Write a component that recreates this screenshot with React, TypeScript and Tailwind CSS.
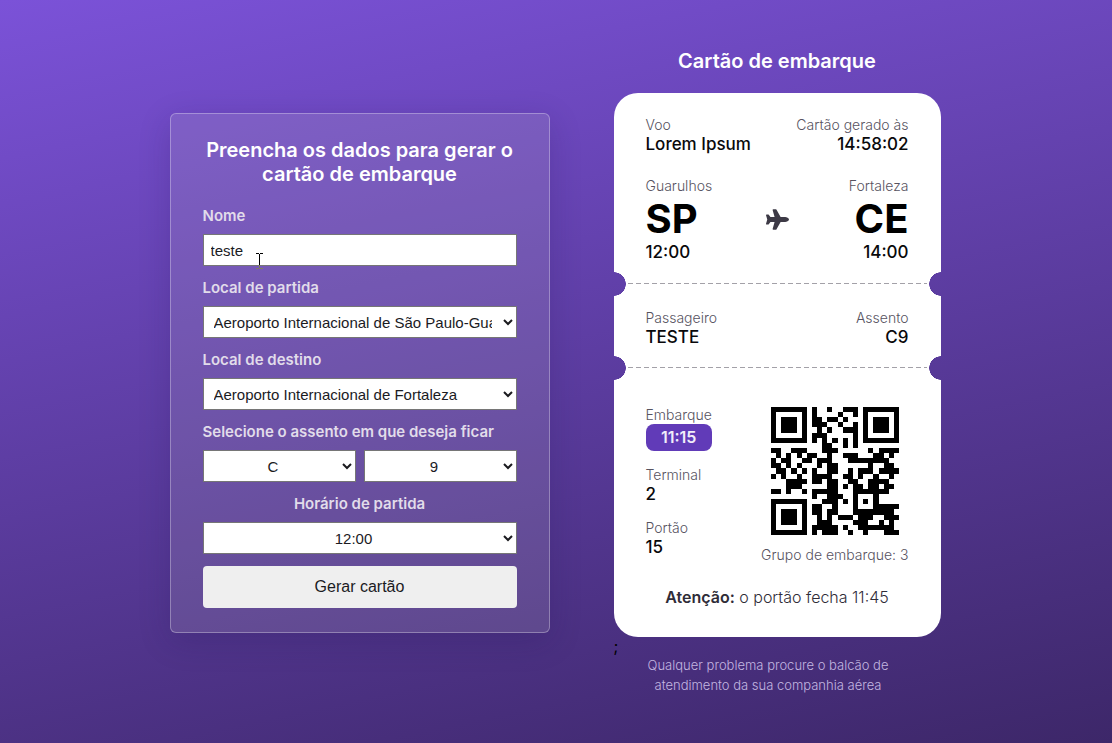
import React from "react";
import { FaPlane } from "react-icons/fa";

const QR_SIZE = 25;
const DATA_CODEWORDS = 34;
const EC_CODEWORDS = 10;
const FORMAT_L4 = 0b110011000101111;

function gfMultiply(a: number, b: number): number {
  let product = 0;
  for (let i = 7; i >= 0; i--) {
    product = (product << 1) ^ ((product >>> 7) * 0x11d);
    product ^= ((b >>> i) & 1) * a;
  }
  return product & 0xff;
}

function errorCorrection(data: number[]): number[] {
  const divisor: number[] = new Array(EC_CODEWORDS).fill(0);
  divisor[EC_CODEWORDS - 1] = 1;
  let root = 1;
  for (let i = 0; i < EC_CODEWORDS; i++) {
    for (let j = 0; j < EC_CODEWORDS; j++) {
      divisor[j] = gfMultiply(divisor[j], root);
      if (j + 1 < EC_CODEWORDS) divisor[j] ^= divisor[j + 1];
    }
    root = gfMultiply(root, 2);
  }
  const result: number[] = new Array(EC_CODEWORDS).fill(0);
  for (const byte of data) {
    const factor = byte ^ (result.shift() as number);
    result.push(0);
    divisor.forEach((d, i) => {
      result[i] ^= gfMultiply(d, factor);
    });
  }
  return result;
}

// Version 2 code, error correction level L, mask 4, byte mode.
function encodeQr(text: string): boolean[][] {
  let bits = "0100" + text.length.toString(2).padStart(8, "0");
  for (const ch of text) bits += ch.charCodeAt(0).toString(2).padStart(8, "0");
  bits += "0000";
  const data: number[] = [];
  for (let i = 0; i < bits.length; i += 8) data.push(parseInt(bits.slice(i, i + 8), 2));
  for (let pad = 0xec; data.length < DATA_CODEWORDS; pad ^= 0xec ^ 0x11) data.push(pad);
  const codewords = data.concat(errorCorrection(data));

  const grid: (boolean | null)[][] = Array.from({ length: QR_SIZE }, () => new Array(QR_SIZE).fill(null));
  const set = (r: number, c: number, dark: boolean) => {
    if (r >= 0 && r < QR_SIZE && c >= 0 && c < QR_SIZE) grid[r][c] = dark;
  };
  for (let i = 0; i < QR_SIZE; i++) {
    set(6, i, i % 2 === 0);
    set(i, 6, i % 2 === 0);
  }
  for (const [r, c] of [[3, 3], [3, QR_SIZE - 4], [QR_SIZE - 4, 3]]) {
    for (let dr = -4; dr <= 4; dr++) {
      for (let dc = -4; dc <= 4; dc++) {
        const ring = Math.max(Math.abs(dr), Math.abs(dc));
        set(r + dr, c + dc, ring !== 2 && ring !== 4);
      }
    }
  }
  for (let dr = -2; dr <= 2; dr++) {
    for (let dc = -2; dc <= 2; dc++) set(18 + dr, 18 + dc, Math.max(Math.abs(dr), Math.abs(dc)) !== 1);
  }
  const format = (i: number) => ((FORMAT_L4 >>> i) & 1) === 1;
  for (let i = 0; i <= 5; i++) set(i, 8, format(i));
  set(7, 8, format(6));
  set(8, 8, format(7));
  set(8, 7, format(8));
  for (let i = 9; i < 15; i++) set(8, 14 - i, format(i));
  for (let i = 0; i < 8; i++) set(8, QR_SIZE - 1 - i, format(i));
  for (let i = 8; i < 15; i++) set(QR_SIZE - 15 + i, 8, format(i));
  set(QR_SIZE - 8, 8, true);

  let index = 0;
  for (let right = QR_SIZE - 1; right >= 1; right -= 2) {
    if (right === 6) right = 5;
    const upward = ((right + 1) & 2) === 0;
    for (let step = 0; step < QR_SIZE; step++) {
      const row = upward ? QR_SIZE - 1 - step : step;
      for (const c of [right, right - 1]) {
        if (grid[row][c] !== null) continue;
        const bit = index < codewords.length * 8 ? (codewords[index >>> 3] >>> (7 - (index & 7))) & 1 : 0;
        index++;
        const mask = (Math.floor(row / 2) + Math.floor(c / 3)) % 2 === 0;
        grid[row][c] = (bit === 1) !== mask;
      }
    }
  }
  return grid as boolean[][];
}

function QrCode({ value }: { value: string }) {
  const path = encodeQr(value)
    .flatMap((row, y) => row.map((dark, x) => (dark ? `M${x} ${y}h1v1h-1z` : "")))
    .join("");
  return (
    <svg viewBox="0 0 25 25" className="mt-px size-32" shapeRendering="crispEdges" role="img" aria-label="QR code">
      <path d={path} />
    </svg>
  );
}

const control =
  "h-8 w-full border border-[#767676] bg-white font-['Liberation_Sans',Arial,sans-serif] text-[15px] text-[#1b1b1f]";
const labelText = "text-[15px]/5 font-semibold text-[#e1dcea]";
const caption = "text-sm/[18px] font-light text-[#57535f]";
const strongValue = "text-[17px]/5 font-medium text-[#09090b]";

function SelectField({ id, label, options }: { id: string; label: string; options: string[] }) {
  return (
    <div className="flex flex-col gap-2">
      <label htmlFor={id} className={labelText}>{label}</label>
      <select id={id} className={`${control} pr-2 pl-1.5`}>
        {options.map((o) => <option key={o}>{o}</option>)}
      </select>
    </div>
  );
}

function Info({ label, value, right }: { label: string; value: string; right?: boolean }) {
  return (
    <div className={right ? "text-right" : ""}>
      <p className={caption}>{label}</p>
      <p className={strongValue}>{value}</p>
    </div>
  );
}

function Place({ city, code, time, right }: { city: string; code: string; time: string; right?: boolean }) {
  return (
    <div className={right ? "text-right" : ""}>
      <p className={caption}>{city}</p>
      <p className="text-[40px]/[47px] font-bold text-black">{code}</p>
      <p className={strongValue}>{time}</p>
    </div>
  );
}

function Tear() {
  return (
    <div className="flex h-6">
      <div className="w-3 bg-[radial-gradient(circle_at_0_50%,transparent_11.5px,white_12px)]" />
      <div className="flex grow flex-col justify-center bg-white px-0.5">
        <div className="h-px bg-[repeating-linear-gradient(to_right,#a3a1a8_0_5px,transparent_5px_8px)]" />
      </div>
      <div className="w-3 bg-[radial-gradient(circle_at_100%_50%,transparent_11.5px,white_12px)]" />
    </div>
  );
}

function TicketForm() {
  return (
    <form
      className="flex w-[380px] flex-col gap-3 rounded-md border border-white/30 bg-[#c8c8c8]/16 px-8 py-6 shadow-[0_8px_32px_rgba(31,20,80,0.2)]"
      onSubmit={(e) => e.preventDefault()}
    >
      <h2 className="mb-2 text-center text-xl/6 font-semibold text-white">
        Preencha os dados para gerar o cartão de embarque
      </h2>
      <div className="flex flex-col gap-2">
        <label htmlFor="nome" className={labelText}>Nome</label>
        <div className="relative flex">
          <input id="nome" defaultValue="teste" className={`${control} px-[7px]`} />
          <svg className="absolute top-[19px] left-[53px] h-4 w-[7px]" viewBox="0 0 7 16" shapeRendering="crispEdges" aria-hidden="true">
            <path d="M0 0h3v1H0zM4 0h3v1H4zM3 1h1v11H3z" fill="#000" />
            <path d="M3 12h1v3H3zM0 15h3v1H0zM4 15h3v1H4z" fill="#7f7f5c" />
          </svg>
        </div>
      </div>
      <SelectField
        id="partida"
        label="Local de partida"
        options={["Aeroporto Internacional de São Paulo-Guarulhos", "Aeroporto Internacional de Fortaleza"]}
      />
      <SelectField id="destino" label="Local de destino" options={["Aeroporto Internacional de Fortaleza"]} />
      <fieldset>
        <legend className={`${labelText} mb-2`}>Selecione o assento em que deseja ficar</legend>
        <div className="flex gap-2">
          <select aria-label="Fileira" className={`${control} px-[5px] text-center`}><option>C</option></select>
          <select aria-label="Número" className={`${control} px-[5px] text-center`}><option>9</option></select>
        </div>
      </fieldset>
      <div className="flex flex-col gap-2 text-center">
        <label htmlFor="horario" className={labelText}>Horário de partida</label>
        <select id="horario" className={`${control} px-[5px] text-center`}><option>12:00</option></select>
      </div>
      <button
        type="submit"
        className="h-[42px] rounded bg-[#efefef] font-['Liberation_Sans',Arial,sans-serif] text-base text-[#1b1b1f]"
      >
        Gerar cartão
      </button>
    </form>
  );
}

function BoardingPass() {
  return (
    <section className="w-[327px] pb-[3px]">
      <h1 className="mb-5 text-center text-xl/6 font-semibold text-white">Cartão de embarque</h1>
      <article>
        <div className="flex flex-col gap-[23px] rounded-t-3xl bg-white px-8 pt-[23px] pb-[10px]">
          <div className="flex justify-between">
            <Info label="Voo" value="Lorem Ipsum" />
            <Info label="Cartão gerado às" value="14:58:02" right />
          </div>
          <div className="grid grid-cols-[1fr_auto_1fr] items-center">
            <Place city="Guarulhos" code="SP" time="12:00" />
            <FaPlane className="size-[23px] text-[#3d3a46]" />
            <Place city="Fortaleza" code="CE" time="14:00" right />
          </div>
        </div>
        <Tear />
        <div className="flex justify-between bg-white px-8 pt-[13px] pb-[9px]">
          <Info label="Passageiro" value="TESTE" />
          <Info label="Assento" value="C9" right />
        </div>
        <Tear />
        <div className="rounded-b-3xl bg-white px-8 pt-[26px] pb-[30px]">
          <div className="flex justify-between">
            <div className="flex flex-col gap-[15px]">
              <div>
                <p className={caption}>Embarque</p>
                <p className="rounded-lg bg-[#613bb8] text-center text-base/[27px] font-semibold text-[#f1edfa]">11:15</p>
              </div>
              <Info label="Terminal" value="2" />
              <Info label="Portão" value="15" />
            </div>
            <div className="flex flex-col items-center gap-[11px]">
              <QrCode value="https://github.com/hitalo-lima" />
              <p className={caption}>Grupo de embarque: 3</p>
            </div>
          </div>
          <p className="mt-[23px] text-center text-base/5 font-light text-[#2f2c38]">
            <strong className="font-semibold">Atenção:</strong> o portão fecha 11:45
          </p>
        </div>
      </article>
      <p className="text-base/[18px] text-black">;</p>
      <p className="mr-[18px] px-8 text-center text-[13px]/5 font-light text-[#c3b6e0]">
        Qualquer problema procure o balcão de atendimento da sua companhia aérea
      </p>
    </section>
  );
}

export default function App() {
  return (
    <main className="flex min-h-screen flex-wrap items-center justify-center gap-16 bg-[linear-gradient(168deg,#7b52d8_0%,#3d2769_100%)] pt-[3px] pr-0.5 font-['Inter',sans-serif]">
      <TicketForm />
      <BoardingPass />
    </main>
  );
}
